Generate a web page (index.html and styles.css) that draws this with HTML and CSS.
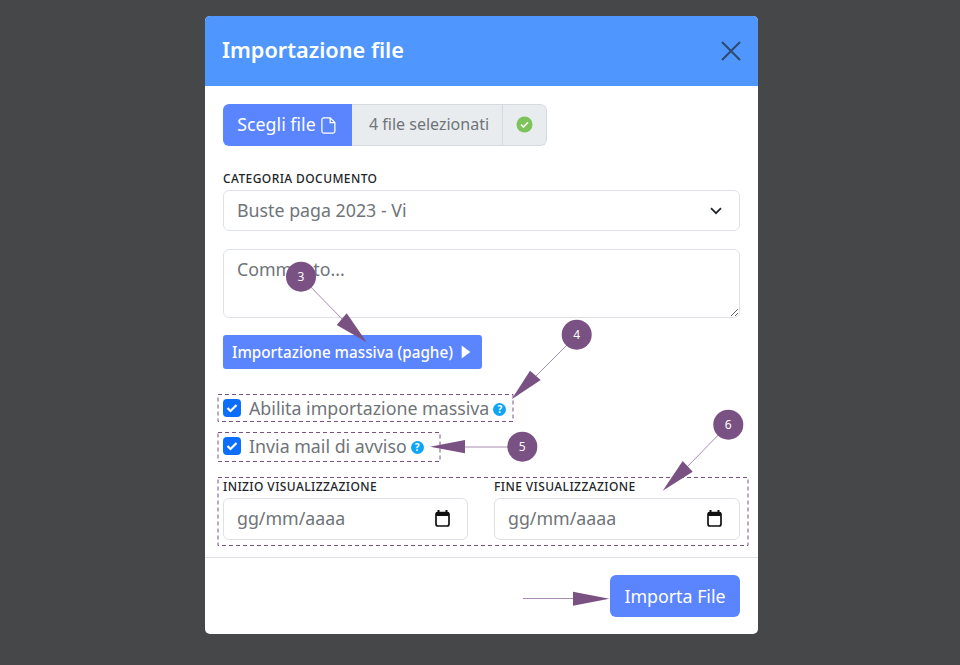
FILE: index.html
```html
<!DOCTYPE html>
<html lang="it">
<head>
<meta charset="utf-8">
<title>Importazione file</title>
<link rel="stylesheet" href="styles.css">
</head>
<body>
<main class="modal">
  <header class="modal-head">
    <h1 class="modal-title">Importazione file</h1>
    <svg class="close-icon" width="20" height="20" viewBox="0 0 20 20"><path d="M1 1 L19 19 M19 1 L1 19" fill="none" stroke="#2f4a6d" stroke-width="2"/></svg>
  </header>
  <section class="modal-body">
    <div class="file-group">
      <div class="file-btn"><span>Scegli file</span>
        <svg width="15" height="17" viewBox="0 0 14 16"><path d="M2.5 .8 H8.6 L13 5.2 V13.5 a1.7 1.7 0 0 1 -1.7 1.7 H2.5 a1.7 1.7 0 0 1 -1.7 -1.7 V2.5 a1.7 1.7 0 0 1 1.7 -1.7 Z M8.6 .8 V5.2 H13" fill="none" stroke="#fff" stroke-width="1.2"/></svg>
      </div>
      <div class="file-name"><span>4 file selezionati</span></div>
      <div class="file-status">
        <svg width="17" height="17" viewBox="0 0 17 17"><circle cx="8.5" cy="8.5" r="8" fill="#7cc35a"/><path d="M5 8.7 L7.5 11 L12 6.3" fill="none" stroke="#fff" stroke-width="1.6"/></svg>
      </div>
    </div>

    <label class="field-label cat-label">CATEGORIA DOCUMENTO</label>
    <div class="select-box">
      <span>Buste paga 2023 - Vi</span>
      <svg width="12" height="8" viewBox="0 0 12 8"><path d="M1 1.2 L6 6.2 L11 1.2" fill="none" stroke="#212529" stroke-width="1.7"/></svg>
    </div>

    <textarea class="comment" placeholder="Commento..."></textarea>

    <button class="mass-btn" type="button">Importazione massiva (paghe)
      <svg width="10" height="14" viewBox="0 0 9 13"><path d="M0.5 0.5 L8.5 6.5 L0.5 12.5 Z" fill="#fff"/></svg>
    </button>

    <div class="check-row first">
      <span class="check"><svg width="12" height="10" viewBox="0 0 12 10"><path d="M1.5 5 L4.5 8 L10.5 2" fill="none" stroke="#fff" stroke-width="2.2"/></svg></span>
      <span class="check-text">Abilita importazione massiva</span>
      <span class="help">?</span>
    </div>
    <div class="check-row second">
      <span class="check"><svg width="12" height="10" viewBox="0 0 12 10"><path d="M1.5 5 L4.5 8 L10.5 2" fill="none" stroke="#fff" stroke-width="2.2"/></svg></span>
      <span class="check-text">Invia mail di avviso</span>
      <span class="help">?</span>
    </div>

    <div class="dates">
      <div class="date-field">
        <label class="field-label">INIZIO VISUALIZZAZIONE</label>
        <div class="date-box">
          <span>gg/mm/aaaa</span>
          <svg width="15" height="17" viewBox="0 0 15 17"><path d="M3.5 0 V3 M11.5 0 V3" stroke="#111" stroke-width="2"/><rect x="1" y="2.5" width="13" height="13.5" rx="2" fill="none" stroke="#111" stroke-width="1.7"/><rect x="1" y="2.5" width="13" height="3.5" fill="#111"/></svg>
        </div>
      </div>
      <div class="date-field">
        <label class="field-label">FINE VISUALIZZAZIONE</label>
        <div class="date-box">
          <span>gg/mm/aaaa</span>
          <svg width="15" height="17" viewBox="0 0 15 17"><path d="M3.5 0 V3 M11.5 0 V3" stroke="#111" stroke-width="2"/><rect x="1" y="2.5" width="13" height="13.5" rx="2" fill="none" stroke="#111" stroke-width="1.7"/><rect x="1" y="2.5" width="13" height="3.5" fill="#111"/></svg>
        </div>
      </div>
    </div>
  </section>
  <footer class="modal-foot">
    <button class="import-btn" type="button">Importa File</button>
  </footer>
</main>

<svg class="notes" width="960" height="665" viewBox="0 0 960 665">
  <g class="dash">
    <rect x="218" y="394.5" width="295" height="27"/>
    <rect x="218" y="432.5" width="222" height="29"/>
    <rect x="218" y="477.5" width="530" height="68"/>
  </g>
  <g class="lead">
    <line x1="301" y1="277" x2="345" y2="322"/>
    <line x1="577" y1="335" x2="535" y2="377"/>
    <line x1="522" y1="447" x2="465" y2="447"/>
    <line x1="728" y1="425" x2="687" y2="467"/>
    <line x1="523" y1="598.5" x2="574" y2="598.5"/>
  </g>
  <g class="head">
    <polygon points="366.7,342.3 346.7,313.3 336.7,325"/>
    <polygon points="511.7,399.3 530,370.7 540.7,380"/>
    <polygon points="430,446.7 465,440 465,453.3"/>
    <polygon points="662.7,490.7 682.7,461 692.7,471.7"/>
    <polygon points="609.3,598.7 573,591.7 573,605.7"/>
    <circle cx="301" cy="276.7" r="15"/>
    <circle cx="576.7" cy="334.7" r="15"/>
    <circle cx="522.3" cy="446.7" r="15"/>
    <circle cx="728.3" cy="424.7" r="15"/>
  </g>
  <g class="num">
    <text x="301" y="281">3</text>
    <text x="576.7" y="339">4</text>
    <text x="522.3" y="451">5</text>
    <text x="728.3" y="429">6</text>
  </g>
</svg>
</body>
</html>
```

FILE: styles.css
```css
* { box-sizing: border-box; }
html, body { margin: 0; height: 665px; overflow: hidden; }
body {
  position: relative;
  background: #454749;
  font-family: "Noto Sans", sans-serif;
  padding: 16px 0 0 205px;
}
.modal {
  width: 553px;
  height: 618px;
  background: #fff;
  border-radius: 5px;
  overflow: hidden;
  display: flex;
  flex-direction: column;
}
.modal-head {
  height: 70px;
  flex: none;
  background: #4f97ff;
  display: flex;
  align-items: center;
  justify-content: space-between;
  padding: 0 17px 0 17px;
}
.modal-title { margin: -1px 0 0; font-size: 21.7px; font-weight: 600; color: #fff; line-height: 1.2; }
.close-icon { display: block; }
.modal-body { flex: 1; padding: 18px 18px 0 18px; display: flex; flex-direction: column; }

.file-group {
  display: flex;
  align-self: flex-start;
  height: 42px;
  border-radius: 6px;
  overflow: hidden;
  color: #6f7479;
}
.file-btn {
  width: 129px;
  background: #5b84ff;
  color: #fff;
  font-size: 17.8px;
  display: flex;
  align-items: center;
  justify-content: center;
  gap: 5px;
  padding-right: 2px;
}
.file-btn span, .file-name span { margin-top: -3px; }
.file-name, .file-status {
  background: #e9ecef;
  border: 1px solid #d6dadf;
  border-left: 0;
  display: flex;
  align-items: center;
  font-size: 16px;
}
.file-name { width: 151px; padding-left: 17px; }
.file-status { width: 44px; justify-content: center; border-radius: 0 6px 6px 0; padding: 0 1px 1px 0; }

.field-label {
  display: block;
  font-size: 12px;
  letter-spacing: .41px;
  font-weight: 500;
  line-height: 16px;
  color: #212529;
}
.cat-label { margin-top: 25px; }
.select-box, .date-box {
  display: flex;
  align-items: center;
  justify-content: space-between;
  border: 1px solid #dee2e6;
  border-radius: 6px;
  background: #fff;
  color: #6f7479;
  font-size: 17.8px;
  padding: 0 17px 0 13px;
}
.select-box span, .date-box span { margin-top: -2px; }
.select-box { height: 41px; margin-top: 3px; }
.comment {
  display: block;
  width: 100%;
  height: 69px;
  margin: 18px 0 0;
  padding: 6px 13px;
  border: 1px solid #dee2e6;
  border-radius: 6px;
  font-family: inherit;
  font-size: 17.8px;
  line-height: 1.5;
  outline: 0;
}
.comment::placeholder { color: #6f7479; opacity: 1; }
.mass-btn {
  align-self: flex-start;
  display: flex;
  align-items: center;
  gap: 8px;
  width: 259px;
  height: 34px;
  margin-top: 17px;
  padding: 0 9px;
  border: 0;
  border-radius: 3px;
  background: #5b84ff;
  color: #fff;
  font-family: inherit;
  font-size: 15.25px;
  font-weight: 500;
}
.check-row { display: flex; align-items: center; height: 26px; color: #6f7479; font-size: 17.8px; }
.check-row.first { margin-top: 26px; }
.check-row.second { margin-top: 12px; }
.check {
  width: 18px;
  height: 18px;
  border-radius: 4px;
  background: #0d6efd;
  display: flex;
  align-items: center;
  justify-content: center;
  margin-right: 8px;
}
.help {
  width: 13px;
  height: 13px;
  border-radius: 50%;
  background: #0ea5f5;
  color: #fff;
  font-size: 10px;
  font-weight: 700;
  line-height: 13px;
  text-align: center;
  margin-left: 4px;
  margin-top: 3px;
}
.dates { display: grid; grid-template-columns: 245px 246px; gap: 26px; margin-top: 20px; }
.date-box { height: 42px; margin-top: 3px; padding-right: 17px; }
.date-box svg { display: block; margin-top: -2px; }

.modal-foot {
  flex: none;
  height: 77px;
  border-top: 1px solid #dee2e6;
  display: flex;
  justify-content: flex-end;
  padding: 17px 18px 0;
}
.import-btn {
  width: 130px;
  height: 42px;
  padding: 0 0 1px;
  border: 0;
  border-radius: 6px;
  background: #5b84ff;
  color: #fff;
  font-family: inherit;
  font-size: 17.8px;
}

.notes { position: absolute; left: 0; top: 0; pointer-events: none; }
.dash rect { fill: none; stroke: #7a5183; stroke-width: 1; stroke-dasharray: 4 3; }
.lead line { stroke: #a98bb0; stroke-width: 1; }
.head polygon, .head circle { fill: #7a5183; }
.num text { fill: #fff; font-family: "Noto Sans", sans-serif; font-size: 12px; text-anchor: middle; }
```
